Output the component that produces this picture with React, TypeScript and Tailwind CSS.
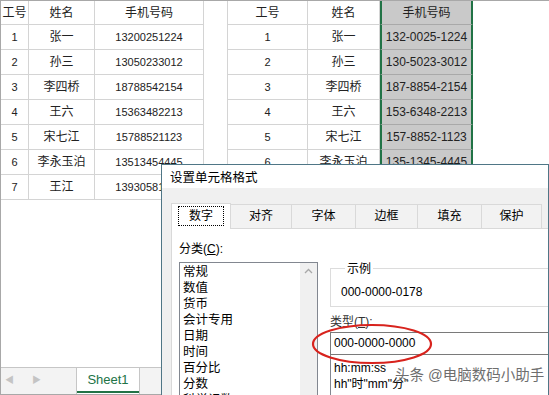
import React from 'react';

const rows = [
  { id: '1', name: '张一', phone: '13200251224', fmt: '132-0025-1224' },
  { id: '2', name: '孙三', phone: '13050233012', fmt: '130-5023-3012' },
  { id: '3', name: '李四桥', phone: '18788542154', fmt: '187-8854-2154' },
  { id: '4', name: '王六', phone: '15363482213', fmt: '153-6348-2213' },
  { id: '5', name: '宋七江', phone: '15788521123', fmt: '157-8852-1123' },
  { id: '6', name: '李永玉泊', phone: '13513454445', fmt: '135-1345-4445' },
  { id: '7', name: '王江', phone: '13930581234', fmt: '139-3058-1234' },
];

const categories = ['常规', '数值', '货币', '会计专用', '日期', '时间', '百分比', '分数', '科学记数'];

const tabs = [
  { label: '对齐', w: 'w-[61px]' },
  { label: '字体', w: 'w-[64px]' },
  { label: '边框', w: 'w-[62px]' },
  { label: '填充', w: 'w-[64px]' },
  { label: '保护', w: 'w-[60px]' },
];

const cell = 'flex items-center justify-center border-r border-b border-[#d4d4d4]';
const cjk = "font-['Liberation_Sans','Noto_Sans_CJK_SC',sans-serif]";

const App = () => {
  return (
    <div className={`relative w-[549px] h-[395px] overflow-hidden bg-white text-[#222] ${cjk}`}>
      {/* Spreadsheet */}
      <div className="flex flex-col h-full border-l border-b border-t border-[#a8a8a8]">
        <div className="flex-1 flex items-start">
          {/* Left table */}
          <div className="grid grid-cols-[28px_66px_109px] text-[12px]">
            <div className={`${cell} h-[24px]`}>工号</div>
            <div className={`${cell} h-[24px]`}>姓名</div>
            <div className={`${cell} h-[24px]`}>手机号码</div>
            {rows.map((r) => (
              <React.Fragment key={r.id}>
                <div className={`${cell} h-[25px] text-[11px]`}>{r.id}</div>
                <div className={`${cell} h-[25px]`}>{r.name}</div>
                <div className={`${cell} h-[25px] text-[11px]`}>{r.phone}</div>
              </React.Fragment>
            ))}
          </div>

          {/* Right table */}
          <div className="ml-[23px] grid grid-cols-[80px_72px_93px] text-[12px] border-l border-[#d4d4d4]">
            <div className={`${cell} h-[24px]`}>工号</div>
            <div className={`${cell} h-[24px]`}>姓名</div>
            <div className="flex items-center justify-center h-[24px] bg-[#c9c9c9] border-x-2 border-b border-[#217346] border-b-[#a9a9a9]">
              手机号码
            </div>
            {rows.map((r) => (
              <React.Fragment key={r.id}>
                <div className={`${cell} h-[25px] text-[11px]`}>{r.id}</div>
                <div className={`${cell} h-[25px]`}>{r.name}</div>
                <div className="flex items-center justify-center h-[25px] bg-[#c9c9c9] border-x-2 border-b border-[#217346] border-b-[#a9a9a9] text-[12px]">
                  {r.fmt}
                </div>
              </React.Fragment>
            ))}
          </div>
        </div>

        {/* Sheet tab bar */}
        <div className="h-[27px] flex items-stretch bg-[#f3f3f3] border-t border-[#c6c6c6]">
          <div className="w-[75px] flex items-center gap-[18px] pl-[4px] text-[9px] text-[#c4c4c4]">
            <span>◀</span>
            <span>▶</span>
          </div>
          <div className="w-[64px] bg-white border-x border-[#c6c6c6] flex flex-col">
            <div className="flex-1 flex items-center justify-center text-[13px] text-[#217346] font-['Liberation_Sans',sans-serif]">
              Sheet1
            </div>
            <div className="h-[2px] bg-[#217346] mb-[1px]" />
          </div>
        </div>
      </div>

      {/* Format cells dialog */}
      <div className="absolute left-[161px] top-[164px] w-[388px] h-[240px] border border-[#4f7686] bg-[#f0f0f0] flex flex-col text-[12px] text-black">
        <div className="h-[31px] bg-white flex items-center pl-[8px] pt-[4px] text-[12.5px]">设置单元格格式</div>
        <div className="flex-1 flex flex-col pl-[9px] pt-[14px]">
          <div className="flex items-end h-[26px]">
            <div className="w-[60px] h-[26px] bg-white border border-b-0 border-[#d9d9d9] flex items-center justify-center relative z-10 mb-[-1px]">
              <span className="border border-dotted border-black px-[10px] leading-[18px]">数字</span>
            </div>
            {tabs.map((t) => (
              <div
                key={t.label}
                className={`${t.w} h-[24px] border-t border-r border-[#d9d9d9] bg-[#f2f2f2] flex items-center justify-center`}
              >
                {t.label}
              </div>
            ))}
          </div>
          <div className="flex-1 bg-white border-t border-l border-[#d9d9d9] flex">
            <div className="ml-[7px] w-[139px] flex flex-col">
              <div className="pt-[12px] leading-[16px]">
                分类(<span className="underline">C</span>):
              </div>
              <div className="mt-[5px] flex-1 border border-[#828790] flex">
                <div className="flex-1 pl-[3px] pt-[1px] leading-[16px] text-[12.5px]">
                  {categories.map((c) => (
                    <div key={c}>{c}</div>
                  ))}
                </div>
                <div className="w-[17px] bg-[#f0f0f0] flex justify-center pt-[5px]">
                  <svg width="9" height="6" viewBox="0 0 9 6">
                    <path d="M1 5 L4.5 1.5 L8 5" fill="none" stroke="#a8a8a8" strokeWidth="1.3" />
                  </svg>
                </div>
              </div>
            </div>
            <div className="ml-[12px] flex-1 flex flex-col pt-[32px]">
              <fieldset className="border border-r-0 border-[#dcdcdc] pl-[10px] pt-[7px] pb-[6px]">
                <legend className="ml-[4px] px-[2px] leading-[16px]">示例</legend>
                <div className="leading-[16px]">000-0000-0178</div>
              </fieldset>
              <div className="mt-[7px] leading-[16px] text-[#333]">
                类型(<span className="underline">T</span>):
              </div>
              <div className="mt-[2px] h-[23px] border border-r-0 border-[#7a7a7a] flex items-center pl-[3px]">
                000-0000-0000
              </div>
              <div className="flex-1 border-l border-[#828790] pl-[3px] pt-[5px] leading-[16px]">
                <div>hh:mm:ss</div>
                <div>hh"时"mm"分"</div>
              </div>
            </div>
          </div>
        </div>
      </div>

      {/* Red annotation */}
      <svg className="absolute left-[311px] top-[323px]" width="122" height="42" viewBox="0 0 122 42">
        <ellipse cx="61" cy="21" rx="59" ry="19" fill="none" stroke="#d8231d" strokeWidth="2.2" />
      </svg>

      {/* Watermark */}
      <div className="absolute left-[395px] top-[365px] text-[14.5px] text-[#555] opacity-85 [text-shadow:0_0_2px_#fff]">
        头条 @电脑数码小助手
      </div>
    </div>
  );
};

export default App;
